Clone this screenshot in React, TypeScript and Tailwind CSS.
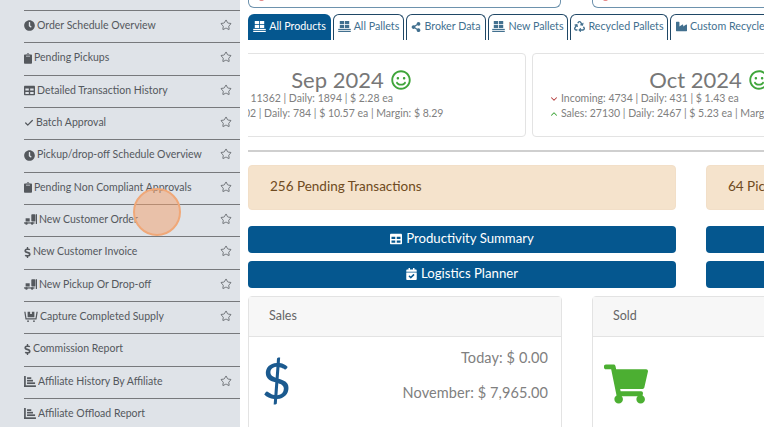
import { FaClock, FaDollarSign, FaRecycle, FaRegSmile, FaShareAlt, FaShoppingCart, FaTable, FaClipboard, FaCalendarCheck, FaIndustry } from "react-icons/fa";
import { Check, ChevronDown, ChevronUp, Star } from "lucide-react";
import type { ReactNode } from "react";

function PalletIcon({ className }: { className?: string }) {
  return (
    <svg viewBox="0 0 16 14" className={className} fill="currentColor">
      <rect x="2" y="0" width="5.5" height="4" />
      <rect x="8.5" y="0" width="5.5" height="4" />
      <rect x="2" y="5" width="5.5" height="4" />
      <rect x="8.5" y="5" width="5.5" height="4" />
      <rect x="0" y="10" width="16" height="1.5" />
      <rect x="0" y="12.5" width="16" height="1.5" />
    </svg>
  );
}

function ForkliftIcon({ className }: { className?: string }) {
  return (
    <svg viewBox="0 0 16 13" className={className} fill="currentColor">
      <rect x="9" y="0" width="5" height="9" rx="1" />
      <rect x="14.5" y="0" width="1.5" height="12" />
      <rect x="2" y="5" width="5" height="4" />
      <rect x="0" y="10" width="13" height="1.5" />
      <circle cx="3" cy="11.5" r="1.5" />
      <circle cx="10" cy="11.5" r="1.5" />
    </svg>
  );
}

function CartFlatIcon({ className }: { className?: string }) {
  return (
    <svg viewBox="0 0 16 13" className={className} fill="currentColor">
      <path d="M0 1h1.5l1.2 7.5h10.6L14.5 1H16l-1.5 9h-13z" />
      <path d="M4 1h3v2.5h2V1h3v6.5H4z" />
      <circle cx="4.5" cy="12" r="1" />
      <circle cx="11.5" cy="12" r="1" />
    </svg>
  );
}

function BarsIcon({ className }: { className?: string }) {
  return (
    <svg viewBox="0 0 14 13" className={className} fill="currentColor">
      <rect x="0" y="0" width="2" height="13" />
      <rect x="0" y="11" width="14" height="2" />
      <rect x="3.5" y="1.5" width="5" height="2" />
      <rect x="3.5" y="4.5" width="7" height="2" />
      <rect x="3.5" y="7.5" width="9.5" height="2" />
    </svg>
  );
}

type Row = { icon: ReactNode; label: string; star: boolean };

const clockCls = "w-[11px] h-[11px] shrink-0";
const clipCls = "w-[8px] h-[11px] shrink-0";
const dollarCls = "w-[7px] h-[11px] shrink-0";
const liftCls = "w-[13px] h-[11px] shrink-0";
const barsCls = "w-[12px] h-[11px] shrink-0";

const rows: Row[] = [
  { icon: <FaClock className={clockCls} />, label: "Order Schedule Overview", star: true },
  { icon: <FaClipboard className={clipCls} />, label: "Pending Pickups", star: true },
  { icon: <FaTable className={clockCls} />, label: "Detailed Transaction History", star: true },
  { icon: <Check className="w-[10px] h-[10px] shrink-0" strokeWidth={3} />, label: "Batch Approval", star: true },
  { icon: <FaClock className={clockCls} />, label: "Pickup/drop-off Schedule Overview", star: true },
  { icon: <FaClipboard className={clipCls} />, label: "Pending Non Compliant Approvals", star: true },
  { icon: <ForkliftIcon className={liftCls} />, label: "New Customer Order", star: true },
  { icon: <FaDollarSign className={dollarCls} />, label: "New Customer Invoice", star: true },
  { icon: <ForkliftIcon className={liftCls} />, label: "New Pickup Or Drop-off", star: true },
  { icon: <CartFlatIcon className="w-[14px] h-[11px] shrink-0" />, label: "Capture Completed Supply", star: true },
  { icon: <FaDollarSign className={dollarCls} />, label: "Commission Report", star: false },
  { icon: <BarsIcon className={barsCls} />, label: "Affiliate History By Affiliate", star: true },
  { icon: <BarsIcon className={barsCls} />, label: "Affiliate Offload Report", star: false },
];

const tabs: { icon: ReactNode; label: string; width: string }[] = [
  { icon: <PalletIcon className="w-[13px] h-[11px]" />, label: "All Products", width: "w-[83px]" },
  { icon: <PalletIcon className="w-[13px] h-[11px]" />, label: "All Pallets", width: "w-[71px]" },
  { icon: <FaShareAlt className="w-[10px] h-[10px]" />, label: "Broker Data", width: "w-[80px]" },
  { icon: <PalletIcon className="w-[13px] h-[11px]" />, label: "New Pallets", width: "w-[80px]" },
  { icon: <FaRecycle className="w-[11px] h-[11px]" />, label: "Recycled Pallets", width: "w-[98px]" },
  { icon: <FaIndustry className="w-[11px] h-[11px]" />, label: "Custom Recycled Pallets", width: "w-[140px]" },
];

function MonthCard({ month, incoming, sales }: { month: string; incoming: string; sales: string }) {
  return (
    <div className="w-[352px] h-[84px] shrink-0 rounded border border-[#e3e3e3] bg-white flex flex-col items-center pt-[12px]">
      <div className="flex items-center gap-[7px] pl-[2px] text-[22px] leading-[27px] text-[#777]">
        {month}
        <FaRegSmile className="w-[20px] h-[20px] text-[#3fa53a]" />
      </div>
      <div className="self-start ml-[16px] -mt-[2px] text-[10.5px] leading-[15px] text-[#808080] whitespace-nowrap">
        <div className="flex items-center gap-[2px]">
          <ChevronDown className="w-[10px] h-[10px] text-[#b33a3a]" strokeWidth={2.5} />
          {incoming}
        </div>
        <div className="flex items-center gap-[2px]">
          <ChevronUp className="w-[10px] h-[10px] text-[#3fa53a]" strokeWidth={2.5} />
          {sales}
        </div>
      </div>
    </div>
  );
}

function PrimaryButton({ children }: { children?: ReactNode }) {
  return (
    <div className="h-[27px] pb-[1px] rounded bg-[#05578f] text-white text-[13.2px] flex items-center justify-center gap-[4px]">
      {children}
    </div>
  );
}

export default function App() {
  return (
    <div className="w-[764px] h-[427px] overflow-hidden flex bg-white relative font-['Lato',sans-serif]">
      <aside className="w-[240px] h-full shrink-0 bg-[#dfe3e8] pl-[24px] pt-[10px]">
        {rows.map((r) => (
          <div key={r.label} className="h-[32.33px] pb-[1.5px] border-t border-[#77797c] flex items-center text-[#54585d] text-[10.5px] gap-[2px]">
            {r.icon}
            <span className="flex-1 truncate">{r.label}</span>
            {r.star && <Star className="w-[12px] h-[12px] mr-[8px] mb-[2px] text-[#45494e]" strokeWidth={1.4} />}
          </div>
        ))}
      </aside>

      <main className="flex-1 min-w-0 ml-[8px] overflow-hidden">
        <div className="h-[9px] -mt-px flex gap-[31px] overflow-hidden">
          <div className="w-[313px] shrink-0 rounded-b-md border border-t-0 border-[#6d92ad] pl-[10px]">
            <div className="w-[5px] h-[2px] rounded-b bg-[#e58a8a]" />
          </div>
          <div className="w-[400px] shrink-0 rounded-b-md border border-t-0 border-[#6d92ad] pl-[10px]">
            <div className="w-[5px] h-[2px] rounded-b bg-[#e58a8a]" />
          </div>
        </div>

        <div className="mt-[6px] h-[26px] flex gap-[2px] whitespace-nowrap text-[10.7px] overflow-hidden">
          {tabs.map((t, i) => (
            <div
              key={t.label}
              className={`${t.width} shrink-0 pb-[2px] flex items-center justify-center gap-[3px] rounded-t-md ${
                i === 0 ? "bg-[#05578f] text-white" : "border-x border-t border-[#1f4766] text-[#42708f]"
              }`}
            >
              {t.icon}
              {t.label}
            </div>
          ))}
        </div>

        <div className="mt-[13px] flex gap-[6px] -ml-[74px]">
          <MonthCard month="Sep 2024" incoming="Incoming: 11362 | Daily: 1894 | $ 2.28 ea" sales="Sales: 4702 | Daily: 784 | $ 10.57 ea | Margin: $ 8.29" />
          <MonthCard month="Oct 2024" incoming="Incoming: 4734 | Daily: 431 | $ 1.43 ea" sales="Sales: 27130 | Daily: 2467 | $ 5.23 ea | Margin: $ 3.80" />
        </div>

        <div className="mt-[13px] border-t-2 border-[#cfcfcf]" />

        <div className="mt-[13px] grid grid-cols-[428px_428px] gap-x-[30px] gap-y-[8px]">
          <div className="h-[45px] mb-[8px] pb-[2px] rounded bg-[#f5e3cc] border border-[#f2dfc8] text-[#6f4b22] text-[13.5px] flex items-center pl-[21px]">256 Pending Transactions</div>
          <div className="h-[45px] mb-[8px] pb-[2px] rounded bg-[#f5e3cc] border border-[#f2dfc8] text-[#6f4b22] text-[13.5px] flex items-center pl-[21px]">64 Pickups Pending</div>
          <PrimaryButton>
            <FaTable className="w-[12px] h-[12px]" />
            Productivity Summary
          </PrimaryButton>
          <PrimaryButton />
          <PrimaryButton>
            <FaCalendarCheck className="w-[11px] h-[12px]" />
            Logistics Planner
          </PrimaryButton>
          <PrimaryButton />
        </div>

        <div className="mt-[8px] flex gap-[30px]">
          <section className="w-[314px] h-[200px] shrink-0 rounded border border-[#e3e3e3]">
            <div className="h-[40px] bg-[#f7f7f7] border-b border-[#e3e3e3] text-[#666] text-[12.5px] flex items-center pl-[20px]">Sales</div>
            <div className="flex justify-between pl-[13px] pr-[13px] pt-[3px]">
              <div className="text-[50px] leading-[50px] mt-[15px] font-medium text-[#1b5a8f]">$</div>
              <div className="text-right text-[14.5px] tracking-[0.1px] leading-[35px] text-[#808080]">
                <div>Today: $ 0.00</div>
                <div>November: $ 7,965.00</div>
              </div>
            </div>
          </section>
          <section className="w-[314px] h-[200px] shrink-0 rounded border border-[#e3e3e3]">
            <div className="h-[40px] bg-[#f7f7f7] border-b border-[#e3e3e3] text-[#666] text-[12.5px] flex items-center pl-[20px]">Sold</div>
            <div className="pl-[11px] pt-[27px]">
              <FaShoppingCart className="w-[44px] h-[40px] text-[#4caf32]" />
            </div>
          </section>
        </div>
      </main>

      <div className="absolute left-[133px] top-[188px] w-[48px] h-[48px] rounded-full bg-[#f4a06a]/50 border-2 border-[#f0a878]" />
    </div>
  );
}
